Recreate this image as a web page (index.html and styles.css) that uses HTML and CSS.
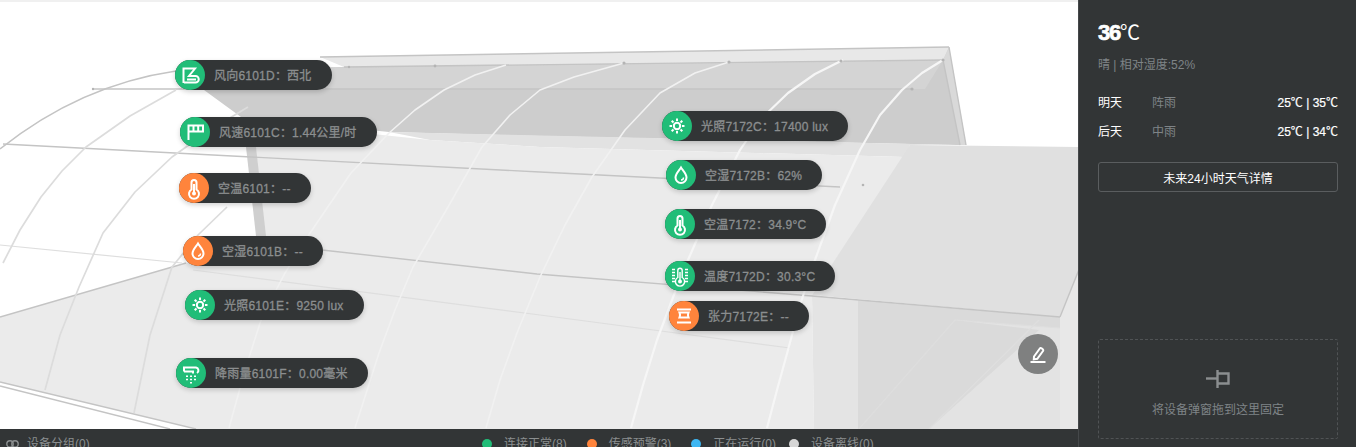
FILE: index.html
```html
<!DOCTYPE html>
<html lang="zh-CN">
<head>
<meta charset="utf-8">
<title>温室大棚</title>
<link rel="stylesheet" href="styles.css">
</head>
<body>
<div class="app">
  <main class="main">
    <section class="scene">
      <svg class="scene-art" width="1078" height="429" viewBox="0 0 1078 429" aria-hidden="true">
        <polygon fill="#e8e8e8" points="320,57 949,47 943,60 344,67"/>
        <polygon fill="#cdcdcd" points="204,90 241,117 389,132 540,136 957,145 966,145 949,47 943,60 344,67 300,68"/>
        <polygon fill="#d4d4d4" points="300,68 943,60 925,89 230,89"/>
        <polygon fill="#d9d9d9" points="943,60 949,47 966,145 960,145"/>
        <polygon fill="#e2e2e2" points="389,132 957,145 910,145 905,157 540,147 430,140"/>
        <polygon fill="#ebebeb" points="241,120 430,140 540,147 905,157 812,295 814,429 196,429 0,382 0,317 186,263 265,236 256,150"/>
        <polygon fill="#e0e0e0" points="910,145 1080,147 1080,267 1060,317 812,295"/>
        <polygon fill="#e4e4e4" points="812,295 858,300 858,429 814,429"/>
        <polygon fill="#dadada" points="858,300 1060,317 1060,429 858,429"/>
        <polygon fill="#e8e8e8" points="1060,317 1080,267 1080,429 1060,429"/>
        <polygon fill="#e3e3e3" points="955,320 1060,328 1060,429 929,429 1039,330"/>
        <polygon fill="#cfcfcf" points="246,147 256,147 266,236 256,236"/>

        <g fill="none" stroke="#c4c4c4" stroke-width="1.4">
          <line x1="93" y1="89" x2="912" y2="89"/>
          <polyline points="3,144 540,172 840,187"/>
          <path d="M0 149 Q80 85 176 71"/>
          <polyline points="0,317 186,263"/>
          <polyline points="322,250 537,274 812,296 1060,317"/>
          <line x1="0" y1="382" x2="196" y2="429"/>
          <line x1="0" y1="386" x2="170" y2="429"/>
          <line x1="949" y1="47" x2="966" y2="145"/>
          <line x1="943" y1="60" x2="960" y2="145"/>
          <line x1="320" y1="57" x2="949" y2="47"/>
          <line x1="344" y1="67" x2="943" y2="60"/>
          <line x1="1060" y1="317" x2="1080" y2="267"/>
        </g>
        <g fill="none" stroke="#dedede" stroke-width="1.2">
          <polyline points="0,245 182,263"/>
          <polyline points="193,270 540,315 790,348"/>
          <line x1="859" y1="429" x2="955" y2="320"/>
          <line x1="929" y1="429" x2="1039" y2="320"/>
          <line x1="955" y1="320" x2="1060" y2="328"/>
        </g>
        <g fill="none" stroke="#dcdcdc" stroke-width="1.7" stroke-linejoin="round">
          <polyline points="3,263 20,230 41,197 62,171 86,147 130,116 176,90"/>
          <polyline points="45,390 60,335 79,287 103,233 135,192 172,157 210,130 248,107"/>
          <polyline points="134,413 150,335 172,267 198,235 227,207"/>
        </g>
        <g fill="none" stroke="#f1f1f1" stroke-width="1.6" stroke-linejoin="round">
          <polyline points="229,428 245,370 262,317 285,273 310,233 351,173 389,133 415,110 444,90 475,75 506,65"/>
          <polyline points="355,428 379,353 395,310 413,267 448,207 482,147 510,115 540,90 574,77 624,63"/>
          <polyline points="486,428 500,380 517,333 540,277 565,225 592,177 625,130 660,93 695,73 729,62"/>
        </g>
        <g fill="none" stroke="#f6f6f6" stroke-width="2.2" stroke-linejoin="round">
          <polyline points="631,428 643,385 657,340 672,300 688,260 712,205 740,150 762,118 788,93 815,74 843,60"/>
          <polyline points="767,428 777,390 788,350 800,305 815,260 835,205 860,150 880,115 902,90 922,73 943,60"/>
        </g>
        <g fill="#b4b4b4">
          <circle cx="863" cy="185" r="1.3"/>
          <circle cx="93" cy="89" r="1.2"/>
          <circle cx="349" cy="67" r="1.2"/>
          <circle cx="435" cy="66" r="1.4"/>
          <circle cx="624" cy="63" r="1.6"/>
          <circle cx="729" cy="62" r="1.6"/>
          <circle cx="841" cy="61" r="1.6"/>
          <circle cx="943" cy="60" r="1.6"/>
          <circle cx="912" cy="89" r="1.6"/>
        </g>
      </svg>

      <div class="chip pos-a">
        <span class="chip-icon ok"><svg viewBox="0 0 30 30"><path d="M8.500 23V8.500H20L14 16h6.500a3 3 0 0 1 0 6.500H9M12 19.500h9"/></svg></span>
        <span class="chip-text">风向6101D：西北</span>
      </div>
      <div class="chip pos-b">
        <span class="chip-icon ok"><svg viewBox="0 0 30 30"><path d="M8.500 23V8.500H23V14.500H8.500M13.500 9V14M18.200 9V14"/></svg></span>
        <span class="chip-text">风速6101C：1.44公里/时</span>
      </div>
      <div class="chip pos-c">
        <span class="chip-icon warn"><svg viewBox="0 0 30 30"><path d="M12.500 16.500V9.500a2.500 2.500 0 0 1 5 0v7a5 5 0 1 1-5 0Z"/><path d="M15 11v8"/><circle class="fill" cx="15" cy="20.500" r="2"/></svg></span>
        <span class="chip-text">空温6101：--</span>
      </div>
      <div class="chip pos-d">
        <span class="chip-icon warn"><svg viewBox="0 0 30 30"><path d="M15 7.500c-1.500 2.500-5.500 6.200-5.500 10a5.500 5.500 0 0 0 11 0c0-3.800-4-7.500-5.500-10Z"/><path d="M17.500 17.500a2.500 2.500 0 0 1-2.500 2.500" class="thin"/></svg></span>
        <span class="chip-text">空湿6101B：--</span>
      </div>
      <div class="chip pos-e">
        <span class="chip-icon ok"><svg viewBox="0 0 30 30"><circle cx="15" cy="15" r="3.200"/><path d="M15 7.500v2.500M15 20v2.500M7.500 15H10M20 15h2.500M9.700 9.700l1.800 1.800M18.500 18.500l1.800 1.800M20.300 9.700l-1.800 1.800M11.500 18.500l-1.800 1.800"/></svg></span>
        <span class="chip-text">光照6101E：9250 lux</span>
      </div>
      <div class="chip pos-f">
        <span class="chip-icon ok"><svg viewBox="0 0 30 30"><path d="M8 13.500V9.500h12a3 3 0 0 1 1 5.500M8 13.500h9v2"/><path d="M11 17.500v1.500M15 17.500v1.500M19 17.500v1.500M11 20.800v1.500M15 20.800v1.500M19 20.800v1.500M15 24v1.500"/></svg></span>
        <span class="chip-text">降雨量6101F：0.00毫米</span>
      </div>
      <div class="chip pos-g">
        <span class="chip-icon ok"><svg viewBox="0 0 30 30"><circle cx="15" cy="15" r="3.200"/><path d="M15 7.500v2.500M15 20v2.500M7.500 15H10M20 15h2.500M9.700 9.700l1.800 1.800M18.500 18.500l1.800 1.800M20.300 9.700l-1.800 1.800M11.500 18.500l-1.800 1.800"/></svg></span>
        <span class="chip-text">光照7172C：17400 lux</span>
      </div>
      <div class="chip pos-h">
        <span class="chip-icon ok"><svg viewBox="0 0 30 30"><path d="M15 7.500c-1.500 2.500-5.500 6.200-5.500 10a5.500 5.500 0 0 0 11 0c0-3.800-4-7.500-5.500-10Z"/><path d="M17.500 17.500a2.500 2.500 0 0 1-2.500 2.500" class="thin"/></svg></span>
        <span class="chip-text">空湿7172B：62%</span>
      </div>
      <div class="chip pos-i">
        <span class="chip-icon ok"><svg viewBox="0 0 30 30"><path d="M12.500 16.500V9.500a2.500 2.500 0 0 1 5 0v7a5 5 0 1 1-5 0Z"/><path d="M15 11v8"/><circle class="fill" cx="15" cy="20.500" r="2"/></svg></span>
        <span class="chip-text">空温7172：34.9°C</span>
      </div>
      <div class="chip pos-j">
        <span class="chip-icon ok"><svg viewBox="0 0 30 30"><path class="thin" d="M12.800 16.500V9.500a2.200 2.200 0 0 1 4.400 0v7a4.600 4.600 0 1 1-4.400 0Z"/><path class="thin" d="M15 11v8"/><circle class="fill" cx="15" cy="20.500" r="2"/><path class="thin" d="M7 8.500h3M7 11.500h3M7 14.500h3M7 17.500h3M7 20.500h3M20 8.500h3M20 11.500h3M20 14.500h3M20 17.500h3M20 20.500h3"/></svg></span>
        <span class="chip-text">温度7172D：30.3°C</span>
      </div>
      <div class="chip pos-k">
        <span class="chip-icon warn"><svg viewBox="0 0 30 30"><path d="M8 8.500h14M8 21.500h14M10.500 11.500h9c-.8 1.800-.8 3.200 0 5h-9c.8-1.800.8-3.200 0-5Z"/></svg></span>
        <span class="chip-text">张力7172E：--</span>
      </div>

      <button class="edit-btn" type="button" aria-label="编辑">
        <svg viewBox="0 0 20 20" width="20" height="20"><path d="M6 12.500 11.800 4.500a1.200 1.200 0 0 1 1.700-.2l1.300 1a1.200 1.200 0 0 1 .2 1.700L9.300 14.800l-3.500.6Z"/><path d="M2.500 18h15"/></svg>
      </button>
    </section>

    <footer class="statusbar">
      <div class="group">
        <svg class="link-icon" viewBox="0 0 13 10" width="13" height="10"><circle cx="4" cy="5" r="3.200"/><circle cx="9" cy="5" r="3.200"/></svg>
        <span>设备分组(0)</span>
      </div>
      <ul class="legend">
        <li><i class="dot dot-ok"></i>连接正常(8)</li>
        <li><i class="dot dot-warn"></i>传感预警(3)</li>
        <li><i class="dot dot-run"></i>正在运行(0)</li>
        <li class="legend-last"><i class="dot dot-off"></i>设备离线(0)</li>
      </ul>
    </footer>
  </main>

  <aside class="panel">
    <div class="temp"><b>36</b>℃</div>
    <div class="cond">晴 | 相对湿度:52%</div>
    <div class="forecast">
      <div class="day"><span class="day-name">明天</span><span class="day-cond">阵雨</span><span class="day-range">25℃ | 35℃</span></div>
      <div class="day"><span class="day-name">后天</span><span class="day-cond">中雨</span><span class="day-range">25℃ | 34℃</span></div>
    </div>
    <button class="detail-btn" type="button">未来24小时天气详情</button>
    <div class="dropzone">
      <svg class="pin" viewBox="0 0 24 18" width="24" height="18"><path d="M0 8.500h11"/><path d="M11.500 0v18"/><path d="M12 3.500h10.500v10H12"/></svg>
      <span>将设备弹窗拖到这里固定</span>
    </div>
  </aside>
</div>
</body>
</html>
```

FILE: styles.css
```css
* { box-sizing: border-box; }
html, body { margin: 0; height: 447px; overflow: hidden; }
body {
  font-family: "Liberation Sans", "Noto Sans CJK SC", sans-serif;
  font-size: 12px;
  background: #323536;
}
.app { display: flex; height: 447px; }
.main { width: 1078px; display: flex; flex-direction: column; }
.scene {
  position: relative;
  height: 429px;
  flex: none;
  background: #fff;
  border-top: 2px solid #f0f0f0;
  overflow: hidden;
}
.scene-art { position: absolute; left: 0; top: -2px; }

.chip {
  position: absolute;
  display: flex;
  align-items: center;
  height: 30px;
  padding-right: 20px;
  background: #323536;
  border-radius: 15px;
  box-shadow: 0 2px 5px rgba(0, 0, 0, .18);
  color: #8b8e8f;
  white-space: nowrap;
}
.chip-icon { width: 30px; height: 30px; border-radius: 50%; flex: none; margin-right: 9px; }
.chip-icon svg {
  display: block;
  width: 30px;
  height: 30px;
  fill: none;
  stroke: #fff;
  stroke-width: 2;
}
.chip-icon .thin { stroke-width: 1.4; }
.chip-icon .fill { fill: #fff; stroke: none; }
.ok { background: #21bd78; }
.warn { background: #ff843c; }
.chip-text {
  padding-bottom: 2px;
  font-size: 12px;
  letter-spacing: .22px;
  -webkit-text-stroke: .3px #8b8e8f;
}

.pos-a { left: 175px; top: 58px; }
.pos-b { left: 180px; top: 115px; }
.pos-c { left: 179px; top: 171px; }
.pos-d { left: 183px; top: 234px; }
.pos-e { left: 185px; top: 288px; }
.pos-f { left: 176px; top: 356px; }
.pos-g { left: 662px; top: 109px; }
.pos-h { left: 666px; top: 158px; }
.pos-i { left: 665px; top: 207px; }
.pos-j { left: 665px; top: 259px; }
.pos-k { left: 669px; top: 299px; }

.edit-btn {
  position: absolute;
  left: 1018px;
  top: 332px;
  width: 40px;
  height: 40px;
  padding: 0;
  border: 0;
  border-radius: 50%;
  background: #7f8080;
  display: flex;
  align-items: center;
  justify-content: center;
}
.edit-btn svg { fill: none; stroke: #fff; stroke-width: 2; }

.statusbar {
  position: relative;
  flex: none;
  height: 30px;
  display: flex;
  padding: 7px 0 0 6px;
  background: #323536;
  color: #8b8f90;
  line-height: 16px;
}
.group { display: flex; align-items: center; gap: 8px; height: 16px; }
.link-icon { fill: none; stroke: #8b8f90; stroke-width: 1.4; }
.legend {
  position: absolute;
  left: 482px;
  top: 7px;
  display: flex;
  gap: 20px;
  margin: 0;
  padding: 0;
  list-style: none;
}
.legend li { display: flex; align-items: center; gap: 12px; }
.legend .legend-last { margin-left: -7px; }
.dot { width: 10px; height: 10px; border-radius: 50%; }
.dot-ok { background: #21bd78; }
.dot-warn { background: #ff843c; }
.dot-run { background: #3db6f2; }
.dot-off { background: #d6d6d6; }

.panel {
  width: 278px;
  flex: none;
  display: flex;
  flex-direction: column;
  padding: 21px 18px 8px 19px;
  background: #323536;
  border-left: 1px solid #45484a;
  color: #fff;
}
.temp { height: 24px; font-size: 20px; line-height: 24px; }
.temp b { font-size: 22px; letter-spacing: -1.2px; -webkit-text-stroke: .7px #fff; }
.cond { margin-top: 12px; color: #7f8487; line-height: 16px; }
.forecast { margin-top: 22px; display: flex; flex-direction: column; gap: 13px; }
.day { display: flex; height: 16px; line-height: 16px; }
.day-name { width: 54px; }
.day-cond { color: #7f8487; }
.day-range { margin-left: auto; -webkit-text-stroke: .2px #fff; }
.detail-btn {
  margin-top: 22px;
  height: 30px;
  padding: 0;
  border: 1px solid #5a5d5f;
  border-radius: 3px;
  background: transparent;
  color: #fff;
  font: inherit;
}
.dropzone {
  margin-top: auto;
  height: 100px;
  display: flex;
  flex-direction: column;
  align-items: center;
  padding-top: 30px;
  gap: 14px;
  border: 1px dashed #505355;
  border-radius: 2px;
  color: #7f8487;
  line-height: 16px;
}
.pin { fill: none; stroke: #8b8e90; stroke-width: 2.4; }
```
